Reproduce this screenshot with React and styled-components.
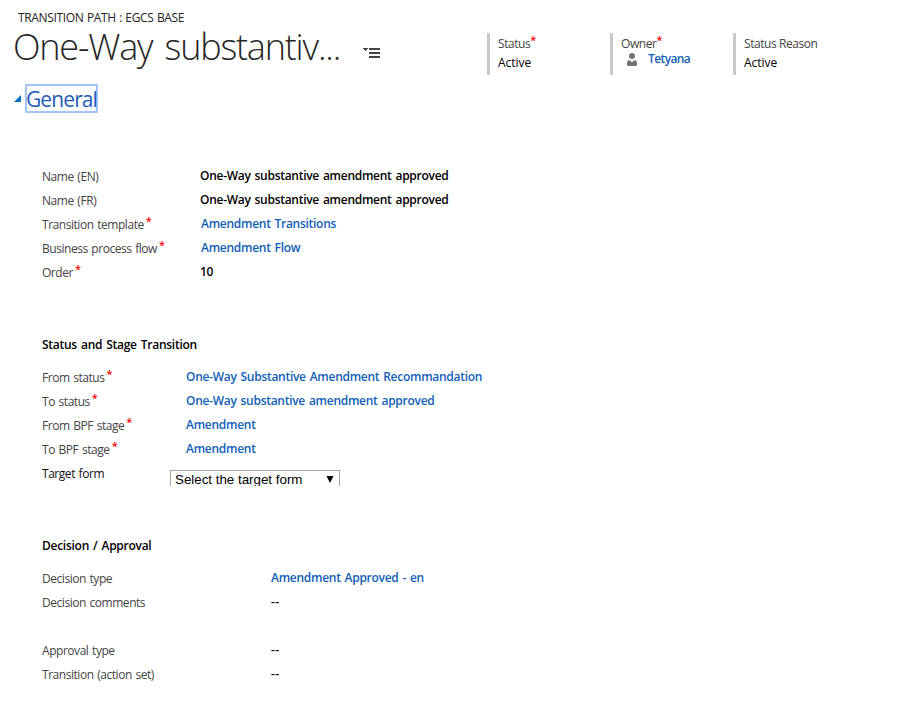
import React from 'react';
import styled, { createGlobalStyle } from 'styled-components';

const GlobalStyle = createGlobalStyle`
  body {
    margin: 0;
    background: #fff;
    color: #000;
    font: 12px/24px "Open Sans", "Noto Sans", sans-serif;
  }
`;

const Page = styled.main`
  display: flex;
  flex-direction: column;
  height: 702px;
  overflow: hidden;
`;

const Header = styled.header`
  display: flex;
  height: 76px;
`;

const Heading = styled.div`
  display: flex;
  flex-direction: column;
  width: 487px;
`;

const Breadcrumb = styled.div`
  height: 18px;
  margin: 9px 0 0 18px;
  line-height: 18px;
  letter-spacing: -0.34px;
  word-spacing: 0.6px;
  color: #222;
`;

const TitleRow = styled.div`
  display: flex;
  align-items: flex-start;
  margin-left: 13px;
`;

const Title = styled.h1`
  width: 350px;
  margin: 0;
  font-size: 36px;
  font-weight: 300;
  line-height: 40px;
  letter-spacing: -1.2px;
  word-spacing: 4px;
  white-space: nowrap;
  color: #262626;
`;

const MenuIcon = styled.svg`
  display: block;
  margin-top: 20px;
`;

const HeaderField = styled.div`
  box-sizing: border-box;
  width: ${({ $width }) => $width}px;
  height: 42px;
  margin-top: 33px;
  padding-left: 8px;
  border-left: 3px solid #c8c8c8;
`;

const HeaderLabel = styled.div`
  height: ${({ $tight }) => ($tight ? 16 : 19)}px;
  line-height: 22px;
  letter-spacing: -0.44px;
  color: #444;
  white-space: nowrap;
`;

const HeaderValue = styled.div`
  display: flex;
  gap: 10px;
  padding-left: ${({ $link }) => ($link ? 5 : 0)}px;
  line-height: ${({ $link }) => ($link ? 20 : 22)}px;
  font-weight: ${({ $link }) => ($link ? 600 : 500)};
  letter-spacing: ${({ $link }) => ($link ? -0.6 : -0.05)}px;
  color: ${({ $link }) => ($link ? '#1160b7' : '#000')};
`;

const PersonIcon = styled.svg`
  display: block;
  margin-top: 4px;
`;

const Required = styled.span`
  display: inline-block;
  height: 10px;
  margin-left: ${({ $gap = 2 }) => $gap}px;
  line-height: 10px;
  letter-spacing: 0;
  vertical-align: 4px;
  font-weight: 600;
  font-size: 11px;
  color: #f00;
`;

const TabHeader = styled.div`
  display: flex;
  align-items: center;
  gap: 4px;
  height: 29px;
  margin: 8px 0 51px 14px;
`;

const TabTitle = styled.h2`
  box-sizing: border-box;
  width: 73px;
  height: 29px;
  margin: 0;
  border: 2px solid #a3c4f7;
  border-radius: 1px;
  font-size: 21px;
  font-weight: 400;
  line-height: 26px;
  letter-spacing: -0.9px;
  text-indent: -1px;
  color: #1d5cb5;
`;

const Section = styled.section`
  display: flex;
  flex-direction: column;
  margin: 0 0 ${({ $after = 0 }) => $after}px 42px;
`;

const SectionTitle = styled.h3`
  height: 24px;
  margin: 0 0 8px;
  font-size: 12px;
  font-weight: 600;
  line-height: 24px;
  letter-spacing: -0.27px;
  word-spacing: 1.2px;
`;

const Row = styled.div`
  display: grid;
  grid-template-columns: ${({ $label }) => $label}px 1fr;
  height: 24px;
  margin-bottom: ${({ $after = 0 }) => $after}px;
  white-space: nowrap;
`;

const Label = styled.div`
  padding-top: 1px;
  line-height: 24px;
  letter-spacing: -0.46px;
  word-spacing: 1px;
  color: ${({ $dark }) => ($dark ? '#111' : '#444')};
`;

const Value = styled.div`
  padding-left: ${({ $link }) => ($link ? 1 : 0)}px;
  font-weight: 600;
  letter-spacing: -0.28px;
  word-spacing: 1.1px;
  color: ${({ $link }) => ($link ? '#1160b7' : '#000')};
`;

const EmptyValue = styled(Value)`
  padding-left: 1px;
  letter-spacing: 0.5px;
`;

const SelectFrame = styled.div`
  height: 16px;
  margin-top: 9px;
  overflow: hidden;
`;

const SelectBox = styled.div`
  display: flex;
  justify-content: space-between;
  box-sizing: border-box;
  width: 170px;
  height: 20px;
  padding: 0 5px 0 4px;
  border: 1px solid #a6a6a6;
  font: 13.33px/17px "Liberation Sans", sans-serif;
`;

const Arrow = styled.svg`
  display: block;
  margin-top: 5px;
`;

function Field({ label, value, link, required, labelWidth, after }) {
  return (
    <Row $label={labelWidth} $after={after}>
      <Label>{label}{required && <Required>*</Required>}</Label>
      {value ? <Value $link={link}>{value}</Value> : <EmptyValue>--</EmptyValue>}
    </Row>
  );
}

export default function App() {
  return (
    <>
      <GlobalStyle />
      <Page>
        <Header>
          <Heading>
            <Breadcrumb>TRANSITION PATH : EGCS BASE</Breadcrumb>
            <TitleRow>
              <Title>One-Way substantiv...</Title>
              <MenuIcon width="17" height="11" fill="#444" shapeRendering="crispEdges">
                <path d="M0 1h5v1H4v1H3v1H2V3H1V2H0zM6 1h11v2H6zM6 5h11v2H6zM6 9h11v2H6z" />
              </MenuIcon>
            </TitleRow>
          </Heading>
          <HeaderField $width={123}>
            <HeaderLabel>Status<Required $gap={0}>*</Required></HeaderLabel>
            <HeaderValue>Active</HeaderValue>
          </HeaderField>
          <HeaderField $width={123}>
            <HeaderLabel $tight>Owner<Required $gap={0}>*</Required></HeaderLabel>
            <HeaderValue $link>
              <PersonIcon width="12" height="13" fill="#737373">
                <circle cx="6" cy="3" r="3" />
                <path d="M3.4 7 6 9.3 8.6 7C10.5 7.4 11 8.8 11 10.5V12Q11 13 10 13H2Q1 13 1 12V10.5C1 8.8 1.5 7.4 3.4 7Z" />
              </PersonIcon>
              Tetyana
            </HeaderValue>
          </HeaderField>
          <HeaderField $width={150}>
            <HeaderLabel>Status Reason</HeaderLabel>
            <HeaderValue>Active</HeaderValue>
          </HeaderField>
        </Header>

        <TabHeader>
          <svg width="7" height="7" fill="#0072c6"><path d="M7 0v7H0z" /></svg>
          <TabTitle>General</TabTitle>
        </TabHeader>

        <Section $after={49}>
          <Field labelWidth={158} label="Name (EN)" value="One-Way substantive amendment approved" />
          <Field labelWidth={158} label="Name (FR)" value="One-Way substantive amendment approved" />
          <Field labelWidth={158} label="Transition template" value="Amendment Transitions" link required />
          <Field labelWidth={158} label="Business process flow" value="Amendment Flow" link required />
          <Field labelWidth={158} label="Order" value="10" required />
        </Section>

        <Section $after={49}>
          <SectionTitle>Status and Stage Transition</SectionTitle>
          <Field labelWidth={143} label="From status" value="One-Way Substantive Amendment Recommandation" link required />
          <Field labelWidth={143} label="To status" value="One-Way substantive amendment approved" link required />
          <Field labelWidth={143} label="From BPF stage" value="Amendment" link required />
          <Field labelWidth={143} label="To BPF stage" value="Amendment" link required />
          <Row $label={128}>
            <Label $dark>Target form</Label>
            <SelectFrame>
              <SelectBox>
                Select the target form
                <Arrow width="8" height="7"><path d="M.5 0h7L4 7z" /></Arrow>
              </SelectBox>
            </SelectFrame>
          </Row>
        </Section>

        <Section>
          <SectionTitle>Decision / Approval</SectionTitle>
          <Field labelWidth={228} label="Decision type" value="Amendment Approved - en" link />
          <Field labelWidth={228} label="Decision comments" after={24} />
          <Field labelWidth={228} label="Approval type" />
          <Field labelWidth={228} label="Transition (action set)" />
        </Section>
      </Page>
    </>
  );
}
